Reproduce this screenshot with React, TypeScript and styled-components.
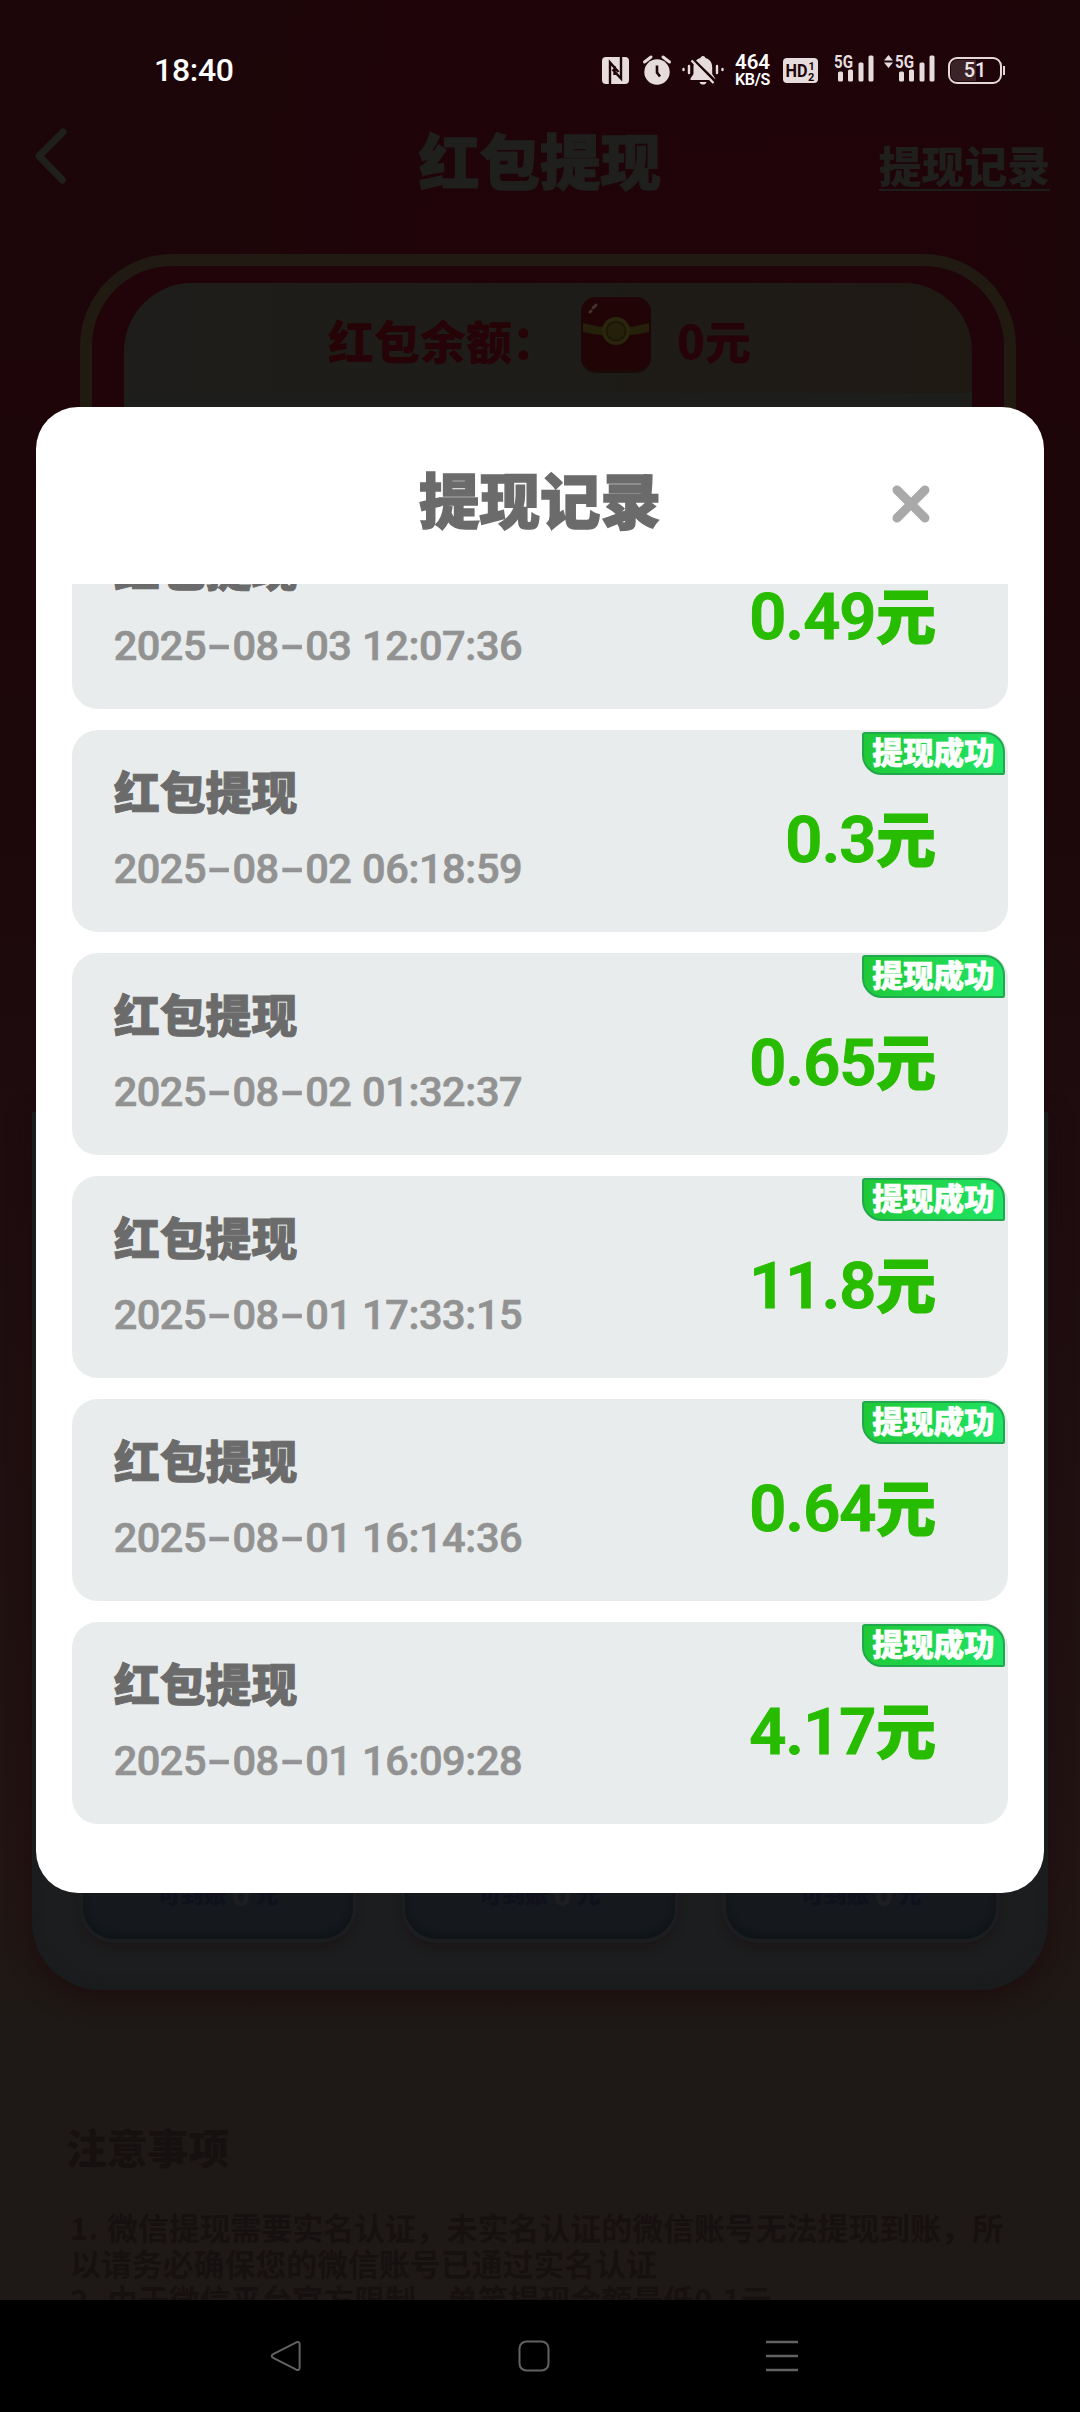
import React from 'react';
import styled, { createGlobalStyle } from 'styled-components';

const GlobalStyle = createGlobalStyle`
  * { box-sizing: border-box; }
  html, body { margin: 0; padding: 0; background: #000; }
`;

const cjk = `'Noto Sans CJK SC', 'Noto Sans', sans-serif`;
const latin = `Roboto, 'Noto Sans', sans-serif`;

const Phone = styled.div`
  position: relative;
  width: 1080px;
  height: 2412px;
  display: flex;
  flex-direction: column;
  overflow: hidden;
  font-family: ${cjk};
  font-weight: 900;
`;

const Page = styled.main`
  flex: 1;
  min-height: 0;
  overflow: hidden;
  display: flex;
  flex-direction: column;
  background:
    linear-gradient(90deg, transparent 20%, rgba(36, 0, 8, 0.35) 40%, rgba(36, 0, 8, 0.35) 90%, transparent 100%) 0 0 / 100% 420px no-repeat,
    linear-gradient(180deg, #1c0609 0, #1d0509 400px, #1c080b 800px, #1e0c0f 1150px, #221413 1850px, #1e1916 2020px, #1e1916 100%);
`;

const StatusBar = styled.header`
  height: 110px;
  padding: 30px 78px 0 154px;
  display: flex;
  align-items: center;
  justify-content: space-between;
  flex: none;
  font-family: ${latin};
  color: #fff;
`;

const Clock = styled.span`
  font-size: 32px;
  font-weight: 500;
  line-height: 40px;
  letter-spacing: -0.3px;
`;

const StatusIcons = styled.div`
  display: flex;
  align-items: center;
  height: 40px;
`;

const Glyph = styled.svg<{ $gap?: number }>`
  display: block;
  flex: none;
  overflow: visible;
  margin-left: ${(p) => p.$gap ?? 0}px;
`;

const NetSpeed = styled.div`
  width: 36px;
  margin-left: 10.5px;
  display: flex;
  flex-direction: column;
  align-items: center;
  font-weight: 600;
  white-space: nowrap;
`;

const SpeedValue = styled.span`
  font-size: 20.5px;
  line-height: 18px;
`;

const SpeedUnit = styled.span`
  font-size: 16px;
  line-height: 17px;
  letter-spacing: -0.3px;
`;

const Battery = styled.div`
  position: relative;
  width: 54px;
  height: 27px;
  margin-left: 13px;
  border: 2px solid #e6d8da;
  border-radius: 9px;
  display: flex;
  align-items: center;
  justify-content: center;
  font-size: 20px;
  font-weight: 500;
  line-height: 22px;
  color: #efe4e5;
  background: linear-gradient(90deg, #3b2327 52%, transparent 52%) content-box;
  padding: 1px;
  &::after {
    content: '';
    position: absolute;
    right: -5px;
    top: 7px;
    width: 2px;
    height: 9px;
    background: #e6d8da;
  }
`;

const TitleBar = styled.div`
  height: 144px;
  padding: 0 30px 44px 34px;
  display: grid;
  grid-template-columns: 1fr auto 1fr;
  align-items: center;
  flex: none;
  color: #1f201e;
`;

const BackArrow = styled.svg`
  display: block;
  margin-bottom: 8px;
`;

const PageTitle = styled.h1`
  margin: 0 4px 2px 0;
  font-size: 60.5px;
  line-height: 70px;
  font-weight: 900;
  -webkit-text-stroke: 1.5px #1f201e;
`;

const RecordLink = styled.span`
  justify-self: end;
  margin-top: 9px;
  font-size: 42.8px;
  line-height: 50px;
  border-bottom: 2px solid #1c1d1c;
`;

const BalanceFrame = styled.section`
  flex: none;
  height: 858px;
  margin: 0 64px 0 80px;
  border: 12px solid #211a10;
  border-top-color: #201a12;
  border-bottom: 0;
  border-radius: 92px 92px 0 0;
  padding: 17px 32px 0;
  background: #20040a;
`;

const BalancePanel = styled.div`
  height: 100%;
  border-radius: 68px 68px 0 0;
  background: linear-gradient(90deg, #1e1d1b 0%, #1e1c18 55%, #1f1913 100%) 0 0 / 100% 110px no-repeat, #1d1d1c;
`;

const BalanceRow = styled.div`
  height: 112px;
  display: flex;
  align-items: center;
  padding-left: 204px;
  color: #260306;
  font-size: 46px;
`;

const Envelope = styled.svg`
  display: block;
  margin: -8px 25px 0 22px;
`;

const Plans = styled.section`
  flex: none;
  height: 878px;
  margin: 0 32px;
  padding: 0 52px 51px 51px;
  display: flex;
  align-items: flex-end;
  justify-content: space-between;
  background: #1c1d1e;
  border-radius: 0 0 68px 68px;
  box-shadow: 0 8px 24px rgba(30, 8, 10, 0.7), inset 0 -5px 10px rgba(24, 27, 30, 0.6);
`;

const Plan = styled.div`
  width: 270px;
  height: 270px;
  border-radius: 32px;
  background: #15181c;
  box-shadow: 0 0 0 4px #1b1d1f, inset 0 -4px 6px #0e1419, 0 6px 8px 2px rgba(28, 16, 18, 0.6);
  display: flex;
  align-items: flex-end;
  justify-content: center;
  padding-bottom: 30px;
  font-size: 23px;
  line-height: 32px;
  color: #10111d;
  white-space: pre;
  b { color: #1e1e22; font-size: 30px; }
`;

const Notes = styled.section`
  padding: 127px 66px 0 66px;
  color: #171011;
`;

const NotesTitle = styled.h2`
  margin: 0 0 32px;
  font-size: 40.8px;
  line-height: 60px;
  font-weight: 900;
`;

const Note = styled.p`
  margin: 0 0 0 4px;
  font-size: 30.9px;
  line-height: 36px;
  font-weight: 700;
  white-space: nowrap;
`;

const NoteIndex = styled.span`
  display: inline-block;
  width: 37px;
`;

const NavBar = styled.nav`
  flex: none;
  height: 112px;
  background: #000;
  display: flex;
  align-items: center;
  padding-left: 270px;
  gap: 216px;
`;

const Dialog = styled.section`
  position: absolute;
  left: 36px;
  top: 407px;
  width: 1008px;
  height: 1486px;
  padding: 0 36px 69px;
  border-radius: 42px;
  background: #fff;
  display: flex;
  flex-direction: column;
`;

const DialogHead = styled.div`
  flex: none;
  height: 177px;
  display: grid;
  grid-template-columns: 1fr auto 1fr;
  align-items: center;
  padding: 5px 0 0;
`;

const DialogTitle = styled.h2`
  grid-column: 2;
  margin: 0;
  font-size: 60.5px;
  line-height: 72px;
  font-weight: 900;
  color: #6b6b6b;
  -webkit-text-stroke: 1.5px #6b6b6b;
`;

const CloseButton = styled.button`
  border: 0;
  padding: 0;
  background: none;
  justify-self: start;
  margin-left: 231px;
  margin-top: 12px;
  height: 38px;
  svg { display: block; }
`;

const List = styled.div`
  flex: 1;
  min-height: 0;
  overflow: hidden;
  display: flex;
  flex-direction: column;
  justify-content: flex-end;
  gap: 21px;
`;

const Record = styled.article`
  position: relative;
  flex: none;
  height: 202px;
  border-radius: 26px;
  background: #e8ecec;
  padding: 0 72px 0 42px;
  display: flex;
  justify-content: space-between;
`;

const RecordInfo = styled.div`
  padding-top: 30px;
`;

const RecordName = styled.div`
  font-size: 45.8px;
  line-height: 60px;
  color: #6b6b6b;
  -webkit-text-stroke: 1px #6b6b6b;
`;

const RecordTime = styled.time`
  display: flex;
  margin-top: 21px;
  font-family: ${latin};
  font-size: 41.5px;
  line-height: 56px;
  font-weight: 500;
  color: #929292;
  -webkit-text-stroke: 0.7px #929292;
`;

const Digit = styled.span<{ $w: number; $stretch?: number }>`
  display: flex;
  justify-content: center;
  width: ${(p) => p.$w}px;
  transform: scaleX(${(p) => p.$stretch ?? 1});
`;

const Amount = styled.div`
  display: flex;
  align-items: baseline;
  padding-top: 62px;
  height: 150px;
  font-size: 60px;
  line-height: 88px;
  color: #28bc00;
  -webkit-text-stroke: 1px #28bc00;
`;

const AmountNumber = styled.span`
  display: flex;
  font-family: ${latin};
  font-size: 65px;
  font-weight: 600;
`;

const Badge = styled.span`
  position: absolute;
  right: 3px;
  top: 2px;
  width: 143px;
  height: 43px;
  border: 2px solid #22a84c;
  border-radius: 3px 20px 2px 20px;
  background: linear-gradient(100deg, #20c836, #1fe566);
  color: #fff;
  font-size: 30.6px;
  line-height: 35px;
  text-align: center;
  -webkit-text-stroke: 0.6px #fff;
`;

const records = [
  { time: '2025-08-03 12:07:36', amount: '0.49' },
  { time: '2025-08-02 06:18:59', amount: '0.3' },
  { time: '2025-08-02 01:32:37', amount: '0.65' },
  { time: '2025-08-01 17:33:15', amount: '11.8' },
  { time: '2025-08-01 16:14:36', amount: '0.64' },
  { time: '2025-08-01 16:09:28', amount: '4.17' },
];

const timeWidth = (c: string) => (c === '-' ? 26.6 : c === ' ' || c === ':' ? 10.8 : 23.05);

const ink = '#e6dcdd';

function NfcIcon() {
  return (
    <Glyph width="27" height="27" viewBox="0 0 27 27">
      <rect width="27" height="27" rx="4" fill={ink} />
      <path d="M8 27V5.500L16.500 15M10.500 12.500 19 21.500V0M12.500 9v9" fill="none" stroke="#1d0509" strokeWidth="2.400" />
    </Glyph>
  );
}

function AlarmIcon() {
  return (
    <Glyph $gap={13.5} width="28" height="30" viewBox="0 0 28 30">
      <circle cx="14" cy="17" r="12.700" fill={ink} />
      <path d="M1.500 7 8 2M26.500 7 20 2" stroke={ink} strokeWidth="3" strokeLinecap="round" />
      <path d="M14 10.500v7l3 4" fill="none" stroke="#1d0509" strokeWidth="2.600" />
    </Glyph>
  );
}

function MutedBellIcon() {
  return (
    <Glyph $gap={11.5} width="42" height="30" viewBox="0 0 42 30">
      <path d="M21 1c1.600 0 2.300 1 2.400 2 4.400 1.200 6.800 4.600 6.800 9v7l3 4.500v1.500H8.500v-1.500l3-4.500v-7c0-4.400 2.600-7.800 7-9 .2-1 .9-2 2.500-2z" fill={ink} />
      <path d="M17.500 27h7c-.6 1.800-1.900 2.600-3.500 2.600s-2.900-.8-3.500-2.600z" fill={ink} />
      <path d="M11 4.500 34 27" stroke="#1d0509" strokeWidth="3" />
      <path d="M9.500 5.500 31.500 28" stroke={ink} strokeWidth="2.400" />
      <path d="M1.500 14v1M7 11v7M35 11v7M40.500 14v1" stroke={ink} strokeWidth="2.400" strokeLinecap="round" />
    </Glyph>
  );
}

function HdIcon() {
  return (
    <Glyph $gap={12.5} width="35" height="25" viewBox="0 0 35 25">
      <rect width="35" height="25" rx="4" fill={ink} />
      <g fill="#1d0509" fontFamily="Roboto, sans-serif" fontWeight="700">
        <text x="2.500" y="19" fontSize="19" textLength="22" lengthAdjust="spacingAndGlyphs">HD</text>
        <text x="25.500" y="11.500" fontSize="11">1</text>
        <text x="25" y="22.500" fontSize="11">2</text>
      </g>
    </Glyph>
  );
}

function SignalIcon({ arrows, gap }: { arrows?: boolean; gap: number }) {
  const dx = arrows ? 11 : 0;
  return (
    <Glyph $gap={gap} width={40 + dx} height="30" viewBox={`0 0 ${40 + dx} 30`}>
      <g fill={ink}>
        {arrows && <path d="M4.500 0 9 5.500H0zM4.500 13 9 7.500H0z" />}
        <text x={dx} y="12.500" fontSize="17.500" fontFamily="Roboto, sans-serif" fontWeight="700" textLength="19" lengthAdjust="spacingAndGlyphs">5G</text>
        <rect x={dx + 4} y="16.500" width="5" height="10" rx="1.500" />
        <rect x={dx + 14} y="14.500" width="5" height="12" rx="1.500" />
        <rect x={dx + 24.5} y="7.500" width="5" height="19" rx="1.500" />
        <rect x={dx + 34.5} y="0.500" width="5" height="26" rx="1.500" />
      </g>
    </Glyph>
  );
}

export default function App() {
  return (
    <>
      <GlobalStyle />
      <Phone>
        <Page>
          <StatusBar>
            <Clock>18:40</Clock>
            <StatusIcons>
              <NfcIcon />
              <AlarmIcon />
              <MutedBellIcon />
              <NetSpeed>
                <SpeedValue>464</SpeedValue>
                <SpeedUnit>KB/S</SpeedUnit>
              </NetSpeed>
              <HdIcon />
              <SignalIcon gap={16} />
              <SignalIcon gap={10} arrows />
              <Battery>51</Battery>
            </StatusIcons>
          </StatusBar>
          <TitleBar>
            <BackArrow width="34" height="56" viewBox="0 0 34 56">
              <path d="M29 4 5 28l23.500 24" fill="none" stroke="#1f201e" strokeWidth="7" strokeLinecap="round" strokeLinejoin="round" />
            </BackArrow>
            <PageTitle>红包提现</PageTitle>
            <RecordLink>提现记录</RecordLink>
          </TitleBar>
          <BalanceFrame>
            <BalancePanel>
              <BalanceRow>
                <span>红包余额：</span>
                <Envelope width="72" height="78" viewBox="0 0 72 78">
                  <rect x="1" y="2" width="70" height="75" rx="15" fill="#1c0a09" />
                  <rect x="1" y="1" width="70" height="73" rx="15" fill="#200406" />
                  <path d="M3 27q12 3 20 4h26q8-1 20-4v9q-12 3-20 3H23q-8 0-20-3z" fill="#24200a" />
                  <circle cx="36" cy="35" r="14" fill="#2a250c" />
                  <circle cx="36" cy="35" r="9.500" fill="#252009" stroke="#1a1606" strokeWidth="1.500" />
                  <path d="m13 12 3-3M10 16l1-1" stroke="#45302f" strokeWidth="3" strokeLinecap="round" />
                </Envelope>
                <span>0元</span>
              </BalanceRow>
            </BalancePanel>
          </BalanceFrame>
          <Plans>
            <Plan>可到账 <b>0</b> 元</Plan>
            <Plan>可到账 <b>0</b> 元</Plan>
            <Plan>可到账 <b>0</b> 元</Plan>
          </Plans>
          <Notes>
            <NotesTitle>注意事项</NotesTitle>
            <Note><NoteIndex>1.</NoteIndex>微信提现需要实名认证，未实名认证的微信账号无法提现到账，所</Note>
            <Note>以请务必确保您的微信账号已通过实名认证</Note>
            <Note><NoteIndex>2.</NoteIndex>由于微信平台官方限制，单笔提现金额最低0.1元</Note>
          </Notes>
        </Page>
        <NavBar>
          <svg width="32" height="32" viewBox="0 0 32 32" fill="none" stroke="#626262" strokeWidth="2">
            <path d="M3.200 14.200 26.300 2.300q3-1 3.300 1.700v24q-.3 2.700-3.300 1.700L3.200 17.800q-3-1.800 0-3.600z" />
          </svg>
          <svg width="32" height="32" viewBox="0 0 32 32" fill="none" stroke="#626262" strokeWidth="2">
            <rect x="1.500" y="1.500" width="29" height="29" rx="7" />
          </svg>
          <svg width="32" height="32" viewBox="0 0 32 32" fill="none" stroke="#626262" strokeWidth="2.400">
            <path d="M0 2h32M0 16h32M0 30h32" />
          </svg>
        </NavBar>

        <Dialog>
          <DialogHead>
            <DialogTitle>提现记录</DialogTitle>
            <CloseButton aria-label="关闭">
              <svg width="38" height="38" viewBox="0 0 38 38">
                <path d="M5 5l28 28M33 5 5 33" stroke="#a9a9a9" strokeWidth="9" strokeLinecap="round" />
              </svg>
            </CloseButton>
          </DialogHead>
          <List>
            {records.map((r) => (
              <Record key={r.time}>
                <RecordInfo>
                  <RecordName>红包提现</RecordName>
                  <RecordTime>
                    {r.time.split('').map((c, i) => (
                      <Digit key={i} $w={timeWidth(c)} $stretch={c === '-' ? 1.7 : 1}>{c}</Digit>
                    ))}
                  </RecordTime>
                </RecordInfo>
                <Amount>
                  <AmountNumber>
                    {r.amount.split('').map((c, i) => (
                      <Digit key={i} $w={c === '.' ? 17.8 : 36.2}>{c}</Digit>
                    ))}
                  </AmountNumber>
                  元
                </Amount>
                <Badge>提现成功</Badge>
              </Record>
            ))}
          </List>
        </Dialog>
      </Phone>
    </>
  );
}
